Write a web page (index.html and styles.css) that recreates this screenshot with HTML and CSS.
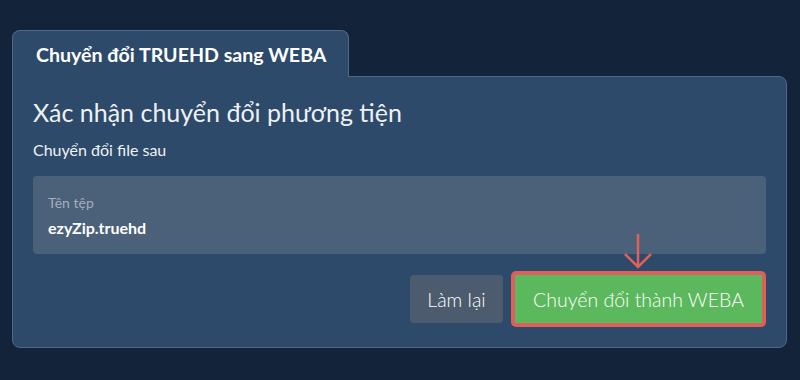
FILE: index.html
```html
<!DOCTYPE html>
<html lang="vi">
<head>
  <meta charset="UTF-8">
  <title>Chuyển đổi TRUEHD sang WEBA</title>
  <link rel="stylesheet" href="styles.css">
</head>
<body>
<div class="converter">
  <div class="tab">Chuyển đổi TRUEHD sang WEBA</div>
  <div class="panel">
    <h2>Xác nhận chuyển đổi phương tiện</h2>
    <p class="sub">Chuyển đổi file sau</p>
    <div class="file-box">
      <span class="file-label">Tên tệp</span>
      <span class="file-name">ezyZip.truehd</span>
    </div>
    <div class="actions">
      <button class="btn btn-reset">Làm lại</button>
      <div class="convert-wrap">
        <svg class="arrow" width="28" height="36" viewBox="0 0 28 36">
          <path d="M14 1 V34 M1 21 L14 34 L27 21" fill="none" stroke="#e0605a" stroke-width="2.5"/>
        </svg>
        <button class="btn btn-convert">Chuyển đổi thành WEBA</button>
      </div>
    </div>
  </div>
</div>
</body>
</html>
```

FILE: styles.css
```css
* {
  margin: 0;
  padding: 0;
  box-sizing: border-box;
}

body {
  font-family: Lato, 'Noto Sans', sans-serif;
  background: #12233a;
  color: #fff;
  padding: 30px 13px 0 12px;
}

.tab {
  display: inline-block;
  width: 337px;
  height: 47px;
  padding: 12px 0 0 23px;
  background: #2d4a6a;
  border: 1px solid #4f6986;
  border-bottom: none;
  border-radius: 8px 8px 0 0;
  font-size: 19.6px;
  font-weight: 700;
  margin-bottom: -1px;
  position: relative;
  z-index: 1;
}

.panel {
  background: #2d4a6a;
  border: 1px solid #4f6986;
  border-radius: 0 8px 8px 8px;
  padding: 20px 20px 20px 20px;
  height: 272px;
}

h2 {
  font-size: 25px;
  font-weight: 400;
  color: #eef1f4;
  line-height: 30px;
}

.sub {
  font-size: 16px;
  line-height: 19px;
  margin-top: 13px;
  color: #eef1f4;
}

.file-box {
  margin-top: 17px;
  background: #4b6079;
  border-radius: 4px;
  height: 78px;
  padding: 18px 15px;
  display: flex;
  flex-direction: column;
}

.file-label {
  font-size: 14px;
  line-height: 17px;
  color: #a4afbd;
}

.file-name {
  font-size: 16px;
  font-weight: 700;
  margin-top: 7px;
}

.actions {
  display: flex;
  justify-content: flex-end;
  align-items: flex-end;
  gap: 8px;
  margin-top: 17px;
}

.btn {
  font-family: inherit;
  font-size: 19.5px;
  font-weight: 300;
  color: #fff;
  border: none;
  border-radius: 4px;
  cursor: pointer;
}

.btn-reset {
  background: #4c5b6d;
  height: 48px;
  width: 93px;
  margin-bottom: 4px;
}

.convert-wrap {
  position: relative;
}

.arrow {
  position: absolute;
  left: 113px;
  top: -38px;
}

.btn-convert {
  background: #5cb85c;
  border: 4px solid #de5f59;
  height: 56px;
  width: 255px;
  border-radius: 5px;
}
```
